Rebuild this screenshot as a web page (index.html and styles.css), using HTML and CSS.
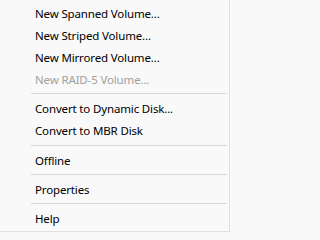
FILE: index.html
```html
<!DOCTYPE html>
<html>
<head>
<meta charset="utf-8">
<link rel="stylesheet" href="styles.css">
</head>
<body>
<div class="menu">
  <div class="item">New Spanned Volume...</div>
  <div class="item">New Striped Volume...</div>
  <div class="item">New Mirrored Volume...</div>
  <div class="item disabled">New RAID-5 Volume...</div>
  <div class="sep"></div>
  <div class="item">Convert to Dynamic Disk...</div>
  <div class="item">Convert to MBR Disk</div>
  <div class="sep wide"></div>
  <div class="item">Offline</div>
  <div class="sep"></div>
  <div class="item">Properties</div>
  <div class="sep"></div>
  <div class="item">Help</div>
</div>
</body>
</html>
```

FILE: styles.css
```css
html, body {
  margin: 0;
  padding: 0;
  background: #f9f9f9;
}
.menu {
  box-sizing: border-box;
  width: 230px;
  height: 232px;
  padding: 2px 2px 2px 0;
  background: #f9f9f9;
  border-right: 1px solid #e0e0e0;
  border-bottom: 1px solid #e0e0e0;
  display: flex;
  flex-direction: column;
  font-family: "Noto Sans", "Open Sans", sans-serif;
  font-size: 11.5px;
  letter-spacing: -0.15px;
  color: #000;
}
.item {
  height: 22px;
  line-height: 23px;
  padding-left: 35px;
  white-space: nowrap;
}
.item.disabled {
  color: #a0a0a0;
}
.sep {
  height: 7px;
  display: flex;
  align-items: center;
  padding-left: 31px;
}
.sep::before {
  content: "";
  flex: 1;
  height: 1px;
  background: #d7d7d7;
}
.sep.wide {
  height: 8px;
}
```
